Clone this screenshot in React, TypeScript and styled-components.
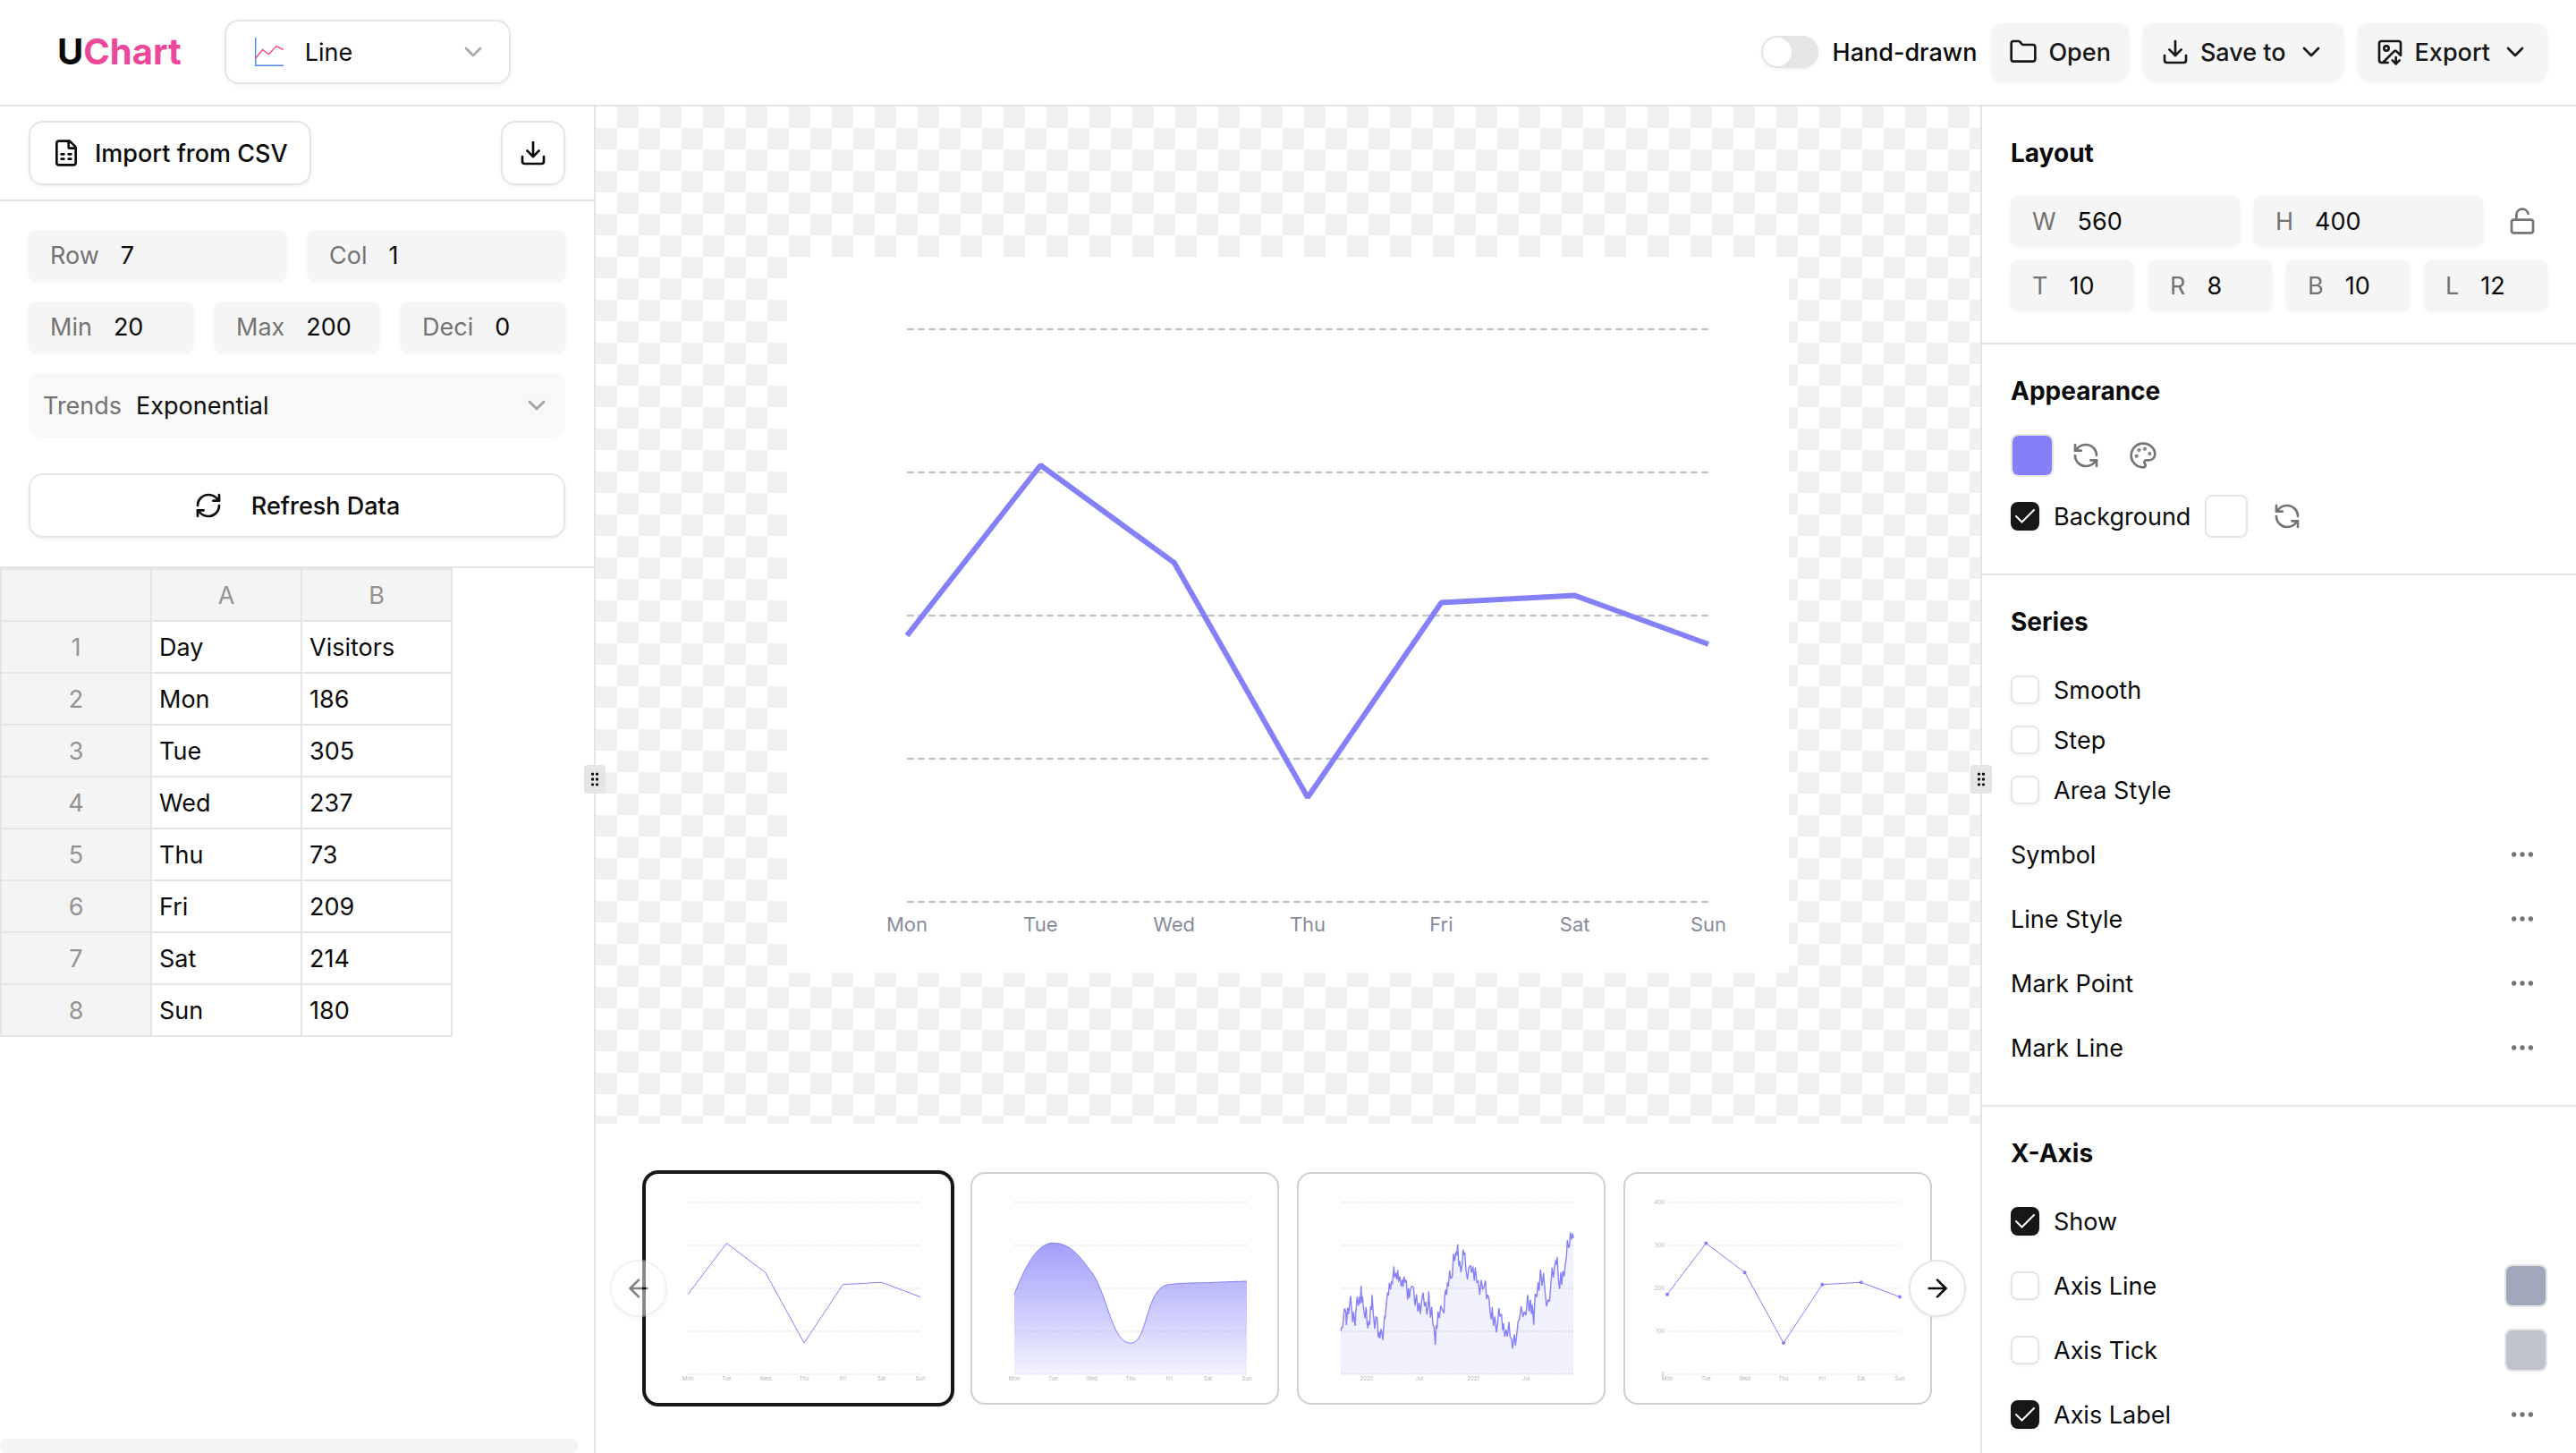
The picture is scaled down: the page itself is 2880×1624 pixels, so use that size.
import React, { useId, useState } from "react";
import styled, { createGlobalStyle, css } from "styled-components";
import {
  ArrowLeft,
  ArrowRight,
  ChevronDown,
  Download,
  Ellipsis,
  FileSpreadsheet,
  Folder,
  GripVertical,
  ImageDown,
  LockOpen,
  Palette,
  RefreshCcw,
  RefreshCw,
} from "lucide-react";

const c = {
  text: "#0a0a0a",
  dark: "#171717",
  muted: "#737373",
  border: "#e5e5e5",
  field: "#f5f5f5",
  accent: "#8480f8",
  grid: "#bfc1c9",
  axisText: "#868c9c",
};

const Global = createGlobalStyle`
  *, *::before, *::after { box-sizing: border-box; }
  body { margin: 0; background: #fff; }
  body, button, input, select {
    font-family: Inter, "Liberation Sans", sans-serif;
    font-size: 27px;
    line-height: 41px;
    color: ${c.text};
  }
  svg { flex: none; display: block; }
`;

/* ---------- shell ---------- */

const Page = styled.div`
  display: grid;
  grid-template-rows: auto minmax(0, 1fr);
  height: 100vh;
  overflow: hidden;
`;

const Header = styled.header`
  display: flex;
  align-items: center;
  justify-content: space-between;
  padding: 22px 32px 23px 64px;
  border-bottom: 2px solid ${c.border};
`;

const HeaderGroup = styled.div<{ $gap: number }>`
  display: flex;
  align-items: center;
  gap: ${(p) => p.$gap}px;
`;

const Logo = styled.a`
  color: ${c.text};
  font-size: 40px;
  line-height: 48px;
  font-weight: 700;
  text-decoration: none;
  span {
    color: #ec4899;
  }
`;

const Workspace = styled.div`
  display: grid;
  grid-template-columns: 666px minmax(0, 1fr) 666px;
  min-height: 0;
`;

const Panel = styled.aside<{ $side: "left" | "right" }>`
  position: relative;
  display: flex;
  flex-direction: column;
  min-height: 0;
  ${(p) =>
    p.$side === "left"
      ? css`
          border-right: 2px solid ${c.border};
        `
      : css`
          border-left: 2px solid ${c.border};
        `}
`;

const PanelScroll = styled.div`
  flex: 1;
  min-height: 0;
  overflow: hidden;
`;

const Handle = styled.div<{ $side: "left" | "right" }>`
  position: absolute;
  z-index: 2;
  top: calc(50% - 17px);
  ${(p) => (p.$side === "left" ? "right" : "left")}: -13px;
  display: grid;
  place-items: center;
  width: 24px;
  height: 32px;
  border-radius: 4px;
  background: ${c.border};
`;

/* ---------- controls ---------- */

const shadow = "0 2px 4px rgba(0, 0, 0, 0.05)";

const OutlineButton = styled.button<{ $gap?: number; $square?: boolean }>`
  display: flex;
  align-items: center;
  justify-content: center;
  gap: ${(p) => p.$gap ?? 16}px;
  height: 72px;
  padding: 0 ${(p) => (p.$square ? 18 : 24)}px;
  border: 2px solid ${c.border};
  border-radius: 16px;
  background: #fff;
  box-shadow: ${shadow};
  font-weight: 500;
`;

const SoftButton = styled.button`
  display: flex;
  align-items: center;
  gap: 12px;
  height: 64px;
  padding: 0 20px;
  border: 0;
  border-radius: 12px;
  background: ${c.field};
  box-shadow: ${shadow};
  color: ${c.dark};
  font-weight: 500;
`;

const IconButton = styled.button`
  display: grid;
  place-items: center;
  width: 56px;
  height: 56px;
  padding: 0;
  border: 0;
  background: transparent;
  color: ${c.muted};
`;

const TypeSelect = styled.div`
  display: flex;
  align-items: center;
  gap: 24px;
  width: 320px;
  height: 72px;
  padding: 0 24px 0 32px;
  border: 2px solid ${c.border};
  border-radius: 16px;
  box-shadow: ${shadow};
`;

const TrendSelect = styled.div`
  display: flex;
  align-items: center;
  gap: 16px;
  height: 72px;
  padding: 0 16px;
  border-radius: 12px;
  background: #f8f8f8;
  label {
    color: ${c.muted};
  }
`;

const NativeSelect = styled.select`
  flex: 1;
  min-width: 0;
  padding: 0;
  border: 0;
  outline: 0;
  appearance: none;
  background: transparent;
`;

const Chevron = styled(ChevronDown)`
  opacity: 0.35;
  pointer-events: none;
`;

const Switch = styled.input`
  display: flex;
  width: 64px;
  height: 36px;
  margin: 0;
  padding: 2px;
  appearance: none;
  border-radius: 18px;
  background: ${c.border};
  box-shadow: ${shadow};
  &::before {
    content: "";
    width: 32px;
    height: 32px;
    border-radius: 50%;
    background: #fff;
  }
  &:checked {
    justify-content: flex-end;
    background: ${c.dark};
  }
`;

const SwitchLabel = styled.label`
  display: flex;
  align-items: center;
  gap: 16px;
  font-weight: 500;
`;

const FieldBox = styled.label`
  display: flex;
  align-items: center;
  gap: 24px;
  flex: 1;
  min-width: 0;
  height: 56px;
  padding: 0 0 0 24px;
  border-radius: 8px;
  background: ${c.field};
  box-shadow: ${shadow};
  color: ${c.muted};
  input {
    flex: 1;
    width: 0;
    min-width: 0;
    padding: 0;
    border: 0;
    outline: 0;
    background: transparent;
  }
`;

const Field = ({ label, value }: { label: string; value: string }) => (
  <FieldBox>
    {label}
    <input type="text" inputMode="numeric" defaultValue={value} />
  </FieldBox>
);

const TickLabel = styled.label`
  display: flex;
  align-items: center;
  gap: 16px;
`;

const TickBox = styled.span`
  display: grid;
  > * {
    grid-area: 1 / 1;
  }
  svg {
    pointer-events: none;
  }
  input {
    width: 32px;
    height: 32px;
    margin: 0;
    appearance: none;
    border: 2px solid ${c.border};
    border-radius: 8px;
    background: #fff;
    box-shadow: ${shadow};
  }
  input:checked {
    border-color: ${c.dark};
    background: ${c.dark};
  }
`;

const Tick = ({ label, checked = false }: { label: string; checked?: boolean }) => {
  const [on, setOn] = useState(checked);
  return (
    <TickLabel>
      <TickBox>
        <input type="checkbox" checked={on} onChange={(e) => setOn(e.target.checked)} />
        {on && (
          <svg width="32" height="32" fill="none" stroke="#fff" strokeWidth="2" strokeLinecap="round">
            <path d="M6 16L12.5 22.5L26 9" />
          </svg>
        )}
      </TickBox>
      {label}
    </TickLabel>
  );
};

const Swatch = styled.input`
  width: 48px;
  height: 48px;
  margin: 0;
  padding: 0;
  appearance: none;
  overflow: hidden;
  border: 2px solid ${c.border};
  border-radius: 8px;
  background: transparent;
  &::-webkit-color-swatch-wrapper {
    padding: 0;
  }
  &::-webkit-color-swatch {
    border: 0;
    border-radius: 6px;
  }
`;

/* ---------- left panel ---------- */

const ImportBar = styled.div`
  display: flex;
  justify-content: space-between;
  padding: 16px 32px;
  border-bottom: 2px solid ${c.border};
`;

const DataForm = styled.form`
  display: flex;
  flex-direction: column;
  gap: 24px;
  padding: 32px;
  border-bottom: 2px solid ${c.border};
`;

const FieldRow = styled.div`
  display: flex;
  gap: 24px;
`;

const RefreshRow = styled.div`
  display: grid;
  padding-top: 16px;
`;

const Sheet = styled.table`
  border-collapse: separate;
  border-spacing: 0;
  table-layout: fixed;
  width: 506px;
  th,
  td {
    height: 58px;
    padding: 0 8px;
    border: 0 solid ${c.border};
    border-width: 0 2px 2px 0;
    text-align: left;
    font-weight: 400;
  }
  th {
    background: #f4f4f4;
    color: #939393;
    text-align: center;
  }
  thead th {
    height: 60px;
    border-top-width: 2px;
  }
  tr > th:first-child {
    width: 170px;
    border-left-width: 2px;
  }
`;

const ScrollTrack = styled.div`
  width: calc(100% - 18px);
  height: 16px;
  border-radius: 8px;
  background: #f4f4f4;
`;

const rows: [string, string][] = [
  ["Day", "Visitors"],
  ["Mon", "186"],
  ["Tue", "305"],
  ["Wed", "237"],
  ["Thu", "73"],
  ["Fri", "209"],
  ["Sat", "214"],
  ["Sun", "180"],
];

const LeftPanel = () => {
  const trend = useId();
  return (
    <Panel $side="left">
      <ImportBar>
        <OutlineButton>
          <FileSpreadsheet size={32} />
          Import from CSV
        </OutlineButton>
        <OutlineButton $square aria-label="Download data">
          <Download size={32} />
        </OutlineButton>
      </ImportBar>
      <DataForm>
        <FieldRow>
          <Field label="Row" value="7" />
          <Field label="Col" value="1" />
        </FieldRow>
        <FieldRow>
          <Field label="Min" value="20" />
          <Field label="Max" value="200" />
          <Field label="Deci" value="0" />
        </FieldRow>
        <TrendSelect>
          <label htmlFor={trend}>Trends</label>
          <NativeSelect id={trend}>
            <option>Exponential</option>
            <option>Linear</option>
          </NativeSelect>
          <Chevron size={32} />
        </TrendSelect>
        <RefreshRow>
          <OutlineButton type="button" $gap={32}>
            <RefreshCw size={32} />
            Refresh Data
          </OutlineButton>
        </RefreshRow>
      </DataForm>
      <PanelScroll>
        <Sheet>
          <thead>
            <tr>
              <th />
              <th scope="col">A</th>
              <th scope="col">B</th>
            </tr>
          </thead>
          <tbody>
            {rows.map(([day, value], i) => (
              <tr key={day}>
                <th scope="row">{i + 1}</th>
                <td>{day}</td>
                <td>{value}</td>
              </tr>
            ))}
          </tbody>
        </Sheet>
      </PanelScroll>
      <ScrollTrack />
      <Handle $side="left">
        <GripVertical size={20} />
      </Handle>
    </Panel>
  );
};

/* ---------- charts ---------- */

const days = rows.slice(1).map((r) => r[0]);
const values = rows.slice(1).map((r) => Number(r[1]));

const Stage = styled.main`
  display: grid;
  grid-template-rows: minmax(0, 1fr) auto;
  min-width: 0;
  min-height: 0;
`;

const Canvas = styled.div`
  display: grid;
  place-items: center;
  min-height: 0;
  padding-bottom: 1px;
  background: #fff conic-gradient(#f0f0f0 25%, #fff 0 50%, #f0f0f0 0 75%, #fff 0) 0 0 / 48px 48px;
`;

const ChartSvg = styled.svg`
  width: 1120px;
  max-width: 100%;
  background: #fff;
`;

const AxisText = styled.text<{ $size: number }>`
  font-size: ${(p) => p.$size}px;
  fill: ${c.axisText};
`;

const MainChart = () => {
  const x = (i: number) => 134 + (i * 896) / 6;
  const y = (v: number) => 721 - v * 1.6;
  return (
    <ChartSvg viewBox="0 0 1120 800" role="img" aria-label="Visitors by day">
      {[0, 100, 200, 300, 400].map((v) => (
        <line key={v} x1="134" x2="1030" y1={y(v)} y2={y(v)} stroke={c.grid} strokeWidth="2" strokeDasharray="8 4" />
      ))}
      <polyline
        points={values.map((v, i) => `${x(i)},${y(v)}`).join(" ")}
        fill="none"
        stroke={c.accent}
        strokeWidth="6"
        strokeLinejoin="bevel"
      />
      {days.map((d, i) => (
        <AxisText key={d} $size={22} x={x(i)} y={754} textAnchor="middle">
          {d}
        </AxisText>
      ))}
    </ChartSvg>
  );
};

const Gallery = styled.div`
  padding: 54px;
  background: #fff;
`;

const Cards = styled.div`
  position: relative;
  display: grid;
  grid-template-columns: repeat(4, minmax(0, 1fr));
  gap: 20px;
`;

const Card = styled.button<{ $active?: boolean }>`
  display: block;
  padding: 8px;
  border: 2px solid ${(p) => (p.$active ? c.dark : "#cfcfcf")};
  border-radius: 16px;
  background: #fff;
  box-shadow: ${(p) => (p.$active ? `0 0 0 2px ${c.dark}` : "none")};
  svg {
    width: 100%;
  }
`;

const RoundButton = styled.button<{ $side: "left" | "right" }>`
  position: absolute;
  top: calc(50% - 32px);
  ${(p) => p.$side}: -38px;
  display: grid;
  place-items: center;
  width: 64px;
  height: 64px;
  padding: 0;
  border: 2px solid ${c.border};
  border-radius: 50%;
  background: #fff;
  box-shadow: ${shadow};
  &:disabled {
    color: ${c.text};
    opacity: 0.5;
  }
`;

const tx = (i: number) => 39 + (i * 260) / 6;
const ty = (v: number) => 216 - v * 0.48;
const thumbPoints = values.map((v, i) => `${tx(i)},${ty(v)}`).join(" ");
const weekLabels = days.map((d, i) => [d, tx(i)] as [string, number]);

const Thumb = ({ labels, name, children }: { labels: [string, number][]; name: string; children: React.ReactNode }) => (
  <svg viewBox="0 0 325 240" role="img" aria-label={name}>
    {[0, 100, 200, 300, 400].map((v) => (
      <line
        key={v}
        x1="39"
        x2="299"
        y1={ty(v)}
        y2={ty(v)}
        stroke={c.grid}
        strokeOpacity="0.5"
        strokeDasharray="2 1"
      />
    ))}
    {children}
    {labels.map(([t, x]) => (
      <AxisText key={x} $size={6} x={x} y={223} textAnchor="middle" fillOpacity={0.7}>
        {t}
      </AxisText>
    ))}
  </svg>
);

const smoothLine =
  "M39 126.7C50 98 64 69.3 82.3 69.3C103 69.3 114 87 125.7 102.3C143 126 148 181.3 169 181.3C189 181.3 185 118 212.3 115.6C227 114 240 114 255.7 113.6C270 113 285 112.3 299 112";

// Daily readings over two years: position along the axis (0-780), depth below the top (0-480).
const daily =
  "27,383 30,370 33,372 36,345 38,312 41,308 44,322 46,364 50,304 53,326 56,300 60,265 63,305 67,354 70,318 72,338 75,366 78,316 82,268 86,298 90,268 92,292 95,232 98,288 100,268 104,312 108,340 112,302 115,352 118,374 121,350 124,362 127,300 130,312 132,262 136,322 141,376 145,334 149,340 153,404 156,386 158,408 162,376 165,390 168,413 171,370 174,332 176,340 180,290 184,254 187,264 190,222 194,244 197,215 200,226 205,166 208,204 212,188 215,210 218,178 221,218 225,200 230,234 234,210 236,234 239,200 243,220 247,212 251,278 254,240 257,272 261,240 266,232 271,236 276,298 281,260 286,318 290,288 294,326 298,284 303,254 308,300 312,285 316,328 320,300 322,250 328,338 332,302 336,362 340,370 344,430 347,364 350,374 353,318 358,340 362,298 367,310 373,324 376,262 379,244 382,262 385,220 388,234 392,180 396,208 401,200 405,124 409,148 413,118 416,130 419,92 423,166 426,148 430,186 434,160 437,110 440,128 443,120 447,180 452,210 456,172 462,162 466,188 470,166 475,214 478,170 484,222 488,214 493,262 498,212 503,244 507,236 512,214 516,276 520,262 524,274 528,320 532,344 535,302 539,366 544,334 549,388 553,360 557,306 561,334 566,326 570,380 573,358 577,402 582,378 586,402 591,352 595,402 600,410 603,442 609,394 613,432 617,396 622,350 626,344 632,300 638,336 643,318 648,330 654,262 659,318 663,278 667,326 670,294 674,362 679,258 684,270 689,220 692,248 697,176 702,232 707,188 711,240 717,300 722,278 727,284 731,232 736,170 740,204 744,170 748,146 751,160 753,134 757,210 761,242 765,186 768,228 772,182 776,200 780,160 784,136 787,78 791,104 794,96 797,52 801,76 805,56 807,72"
    .split(" ")
    .map((p) => p.split(",").map(Number))
    .map(([px, py]) => `${(px / 3 + 30).toFixed(1)},${(py / 3 + 40).toFixed(1)}`)
    .join(" ");

const ChartGallery = () => (
  <Gallery>
    <Cards>
      <Card $active>
        <Thumb labels={weekLabels} name="Basic line">
          <polyline points={thumbPoints} fill="none" stroke={c.accent} strokeWidth="1" />
        </Thumb>
      </Card>
      <Card>
        <Thumb labels={weekLabels} name="Smooth area">
          <defs>
            <linearGradient id="area" x1="0" y1="0" x2="0" y2="1">
              <stop offset="0" stopColor={c.accent} stopOpacity="0.75" />
              <stop offset="1" stopColor={c.accent} stopOpacity="0.1" />
            </linearGradient>
          </defs>
          <path d={`${smoothLine}V216H39Z`} fill="url(#area)" />
          <path d={smoothLine} fill="none" stroke={c.accent} strokeWidth="1" />
        </Thumb>
      </Card>
      <Card>
        <Thumb
          labels={[
            ["2020", 68],
            ["Jul", 127],
            ["2021", 187],
            ["Jul", 246],
          ]}
          name="Daily area"
        >
          <polygon points={`39,216 ${daily} 299,216`} fill={c.accent} fillOpacity="0.11" />
          <polyline points={daily} fill="none" stroke={c.accent} strokeWidth="1.4" strokeLinejoin="bevel" />
        </Thumb>
      </Card>
      <Card>
        <Thumb labels={weekLabels} name="Line with points">
          <polyline points={thumbPoints} fill="none" stroke={c.accent} strokeWidth="1" />
          {values.map((v, i) => (
            <circle key={days[i]} cx={tx(i)} cy={ty(v)} r="2" fill={c.accent} />
          ))}
          {[0, 100, 200, 300, 400].map((v) => (
            <AxisText key={v} $size={6} x={36} y={ty(v) + 2} textAnchor="end" fillOpacity={0.7}>
              {v}
            </AxisText>
          ))}
        </Thumb>
      </Card>
      <RoundButton $side="left" disabled aria-label="Previous charts">
        <ArrowLeft size={32} />
      </RoundButton>
      <RoundButton $side="right" aria-label="Next charts">
        <ArrowRight size={32} />
      </RoundButton>
    </Cards>
  </Gallery>
);

/* ---------- right panel ---------- */

const Section = styled.section`
  padding: 32px 32px 28px;
  border-bottom: 2px solid ${c.border};
`;

const SectionTitle = styled.h2`
  margin: 0 0 20px;
  font-size: 28px;
  line-height: 40px;
  font-weight: 700;
`;

const Row = styled.div<{ $gap?: number; $height?: number }>`
  display: flex;
  align-items: center;
  gap: ${(p) => p.$gap ?? 16}px;
  height: ${(p) => p.$height ?? 72}px;
`;

const SpreadRow = styled(Row)`
  justify-content: space-between;
`;

const TickGroup = styled.div`
  padding: 8px 0;
`;

const More = ({ label }: { label: string }) => (
  <IconButton aria-label={`${label} options`}>
    <Ellipsis size={32} />
  </IconButton>
);

const RightPanel = () => (
  <Panel $side="right">
    <PanelScroll>
      <Section>
        <SectionTitle>Layout</SectionTitle>
        <Row>
          <Field label="W" value="560" />
          <Field label="H" value="400" />
          <IconButton aria-label="Lock ratio">
            <LockOpen size={32} />
          </IconButton>
        </Row>
        <Row>
          <Field label="T" value="10" />
          <Field label="R" value="8" />
          <Field label="B" value="10" />
          <Field label="L" value="12" />
        </Row>
      </Section>
      <Section>
        <SectionTitle>Appearance</SectionTitle>
        <Row $gap={8} $height={64}>
          <Swatch type="color" defaultValue="#8480f8" aria-label="Series color" />
          <IconButton aria-label="Reset color">
            <RefreshCcw size={32} />
          </IconButton>
          <IconButton aria-label="Palette">
            <Palette size={32} />
          </IconButton>
        </Row>
        <Row>
          <Tick label="Background" checked />
          <Swatch type="color" defaultValue="#ffffff" aria-label="Background color" />
          <IconButton aria-label="Reset background">
            <RefreshCcw size={32} />
          </IconButton>
        </Row>
      </Section>
      <Section>
        <SectionTitle>Series</SectionTitle>
        <TickGroup>
          {["Smooth", "Step", "Area Style"].map((t) => (
            <Row key={t} $height={56}>
              <Tick label={t} />
            </Row>
          ))}
        </TickGroup>
        {["Symbol", "Line Style", "Mark Point", "Mark Line"].map((t) => (
          <SpreadRow key={t}>
            {t}
            <More label={t} />
          </SpreadRow>
        ))}
      </Section>
      <Section>
        <SectionTitle>X-Axis</SectionTitle>
        <SpreadRow>
          <Tick label="Show" checked />
        </SpreadRow>
        <SpreadRow>
          <Tick label="Axis Line" />
          <Swatch type="color" defaultValue="#a2a8bb" aria-label="Axis line color" />
        </SpreadRow>
        <SpreadRow>
          <Tick label="Axis Tick" />
          <Swatch type="color" defaultValue="#bfc3cb" aria-label="Axis tick color" />
        </SpreadRow>
        <SpreadRow>
          <Tick label="Axis Label" checked />
          <More label="Axis Label" />
        </SpreadRow>
      </Section>
    </PanelScroll>
    <Handle $side="right">
      <GripVertical size={20} />
    </Handle>
  </Panel>
);

const LineIcon = () => (
  <svg width="32" height="32" fill="none" strokeWidth="1.4">
    <path d="M0.7 0V31.3H32" stroke="#4d86ea" />
    <path d="M1 23L8.5 13.5L15.5 18.5L24 9.5L32 13.5" stroke="#ee4f82" />
  </svg>
);

export default function App() {
  return (
    <>
      <Global />
      <Page>
        <Header>
          <HeaderGroup $gap={48}>
            <Logo href="#">
              U<span>Chart</span>
            </Logo>
            <TypeSelect>
              <LineIcon />
              <NativeSelect aria-label="Chart type">
                <option>Line</option>
                <option>Bar</option>
                <option>Pie</option>
              </NativeSelect>
              <Chevron size={32} />
            </TypeSelect>
          </HeaderGroup>
          <HeaderGroup $gap={16}>
            <SwitchLabel>
              <Switch type="checkbox" role="switch" />
              Hand-drawn
            </SwitchLabel>
            <SoftButton>
              <Folder size={32} />
              Open
            </SoftButton>
            <SoftButton>
              <Download size={32} />
              Save to
              <ChevronDown size={32} />
            </SoftButton>
            <SoftButton>
              <ImageDown size={32} />
              Export
              <ChevronDown size={32} />
            </SoftButton>
          </HeaderGroup>
        </Header>
        <Workspace>
          <LeftPanel />
          <Stage>
            <Canvas>
              <MainChart />
            </Canvas>
            <ChartGallery />
          </Stage>
          <RightPanel />
        </Workspace>
      </Page>
    </>
  );
}
